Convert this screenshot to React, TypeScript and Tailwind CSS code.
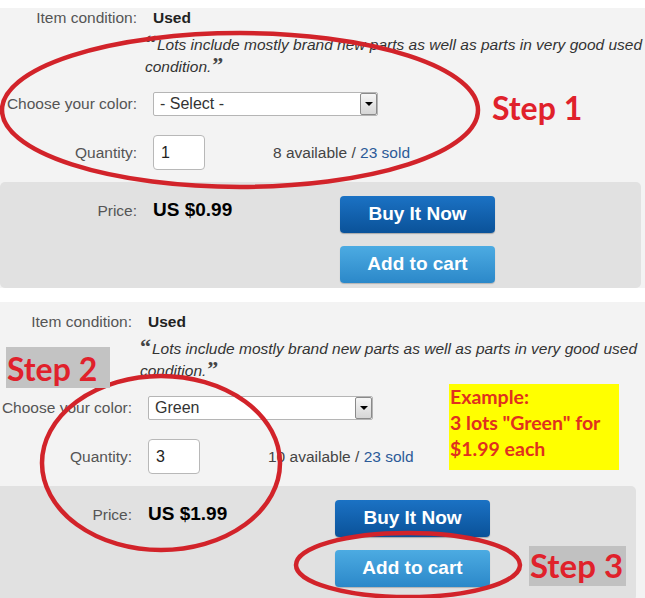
import React from "react";

interface PanelProps {
  color: string;
  qty: string;
  available: string;
  price: string;
  second?: boolean;
}

function ListingPanel({ color, qty, available, price, second }: PanelProps) {
  return (
    <div
      className={
        second
          ? "-ml-[5px] w-[650px] bg-[#f3f3f3] pt-[2px]"
          : "w-[650px] bg-[#f3f3f3]"
      }
    >
      {/* item condition */}
      <div className="mt-[8px] flex h-[20px] items-center text-[15.5px]">
        <span className="w-[137px] text-right text-[#555]">Item condition:</span>
        <span className="ml-[16px] font-bold text-[#222]">Used</span>
      </div>

      <p className="ml-[145px] mt-[6px] w-[500px] text-[15.5px] italic leading-[22px] text-[#333]">
        <span className="relative top-[0px] mr-[1px] font-['Liberation_Serif'] text-[22px] font-bold not-italic leading-[0] text-[#444]">
          “
        </span>
        Lots include mostly brand new parts as well as parts in very good used condition.
        <span className="relative top-[0px] ml-[1px] font-['Liberation_Serif'] text-[22px] font-bold not-italic leading-[0] text-[#444]">
          ”
        </span>
      </p>

      {/* color select */}
      <div className="mt-[14px] flex h-[24px] items-center text-[15.5px]">
        <span className="w-[137px] text-right text-[#555]">Choose your color:</span>
        <div className="ml-[16px] flex h-[24px] w-[225px] items-center justify-between rounded-[2px] border border-[#b5b5b5] bg-white pl-[6px]">
          <span className="text-[16px] text-[#333]">{color}</span>
          <div className="flex h-[22px] w-[17px] items-center justify-center rounded-[2px] border border-[#8a8a8a] bg-gradient-to-b from-[#f6f6f6] to-[#d6d6d6]">
            <div className="h-0 w-0 border-x-[4px] border-t-[4px] border-x-transparent border-t-black" />
          </div>
        </div>
      </div>

      {/* quantity */}
      <div className="mt-[19px] flex h-[35px] items-center text-[15.5px]">
        <span className="w-[137px] text-right text-[#555]">Quantity:</span>
        <div className="ml-[16px] flex h-[35px] w-[52px] items-center rounded-[4px] border border-[#b8b8b8] bg-white pl-[7px] text-[16px] text-[#222]">
          {qty}
        </div>
        <span className="ml-[68px] text-[#444]">
          {available} available / <span className="text-[#2b5a98]">23 sold</span>
        </span>
      </div>

      {/* price band */}
      <div
        className={
          second
            ? "mt-[12px] flex h-[115px] w-[641px] rounded-[5px] bg-[#e1e1e1]"
            : "mt-[12px] flex h-[106px] w-[641px] rounded-[5px] bg-[#e1e1e1]"
        }
      >
        <span className="mt-[17px] h-[20px] w-[137px] text-right text-[15.5px] text-[#555]">Price:</span>
        <span className="ml-[16px] mt-[16px] w-[187px] text-[19px] font-bold leading-[24px] text-black">
          US {price}
        </span>
        <div className="flex flex-col gap-[13px] pt-[14px]">
          <button className="h-[37px] w-[155px] rounded-[4px] bg-gradient-to-b from-[#1b72c4] to-[#0a5299] text-[19px] font-bold text-white shadow-[0_1px_1px_rgba(0,0,0,0.25)]">
            Buy It Now
          </button>
          <button className="h-[37px] w-[155px] rounded-[4px] bg-gradient-to-b from-[#4cabe2] to-[#2b88c9] text-[19px] font-bold text-white shadow-[0_1px_1px_rgba(0,0,0,0.2)]">
            Add to cart
          </button>
        </div>
      </div>
      {!second && <div className="h-[14px] bg-white" />}
    </div>
  );
}

export default function App() {
  return (
    <div className="relative h-[598px] w-[645px] overflow-hidden bg-white font-['Liberation_Sans',Arial,sans-serif]">
      <ListingPanel color="- Select -" qty="1" available="8" price="$0.99" />
      <ListingPanel color="Green" qty="3" available="10" price="$1.99" second />

      {/* hand-drawn annotations */}
      <svg className="pointer-events-none absolute left-0 top-0" width="645" height="598" viewBox="0 0 645 598">
        <g fill="none" stroke="#d2232a" strokeWidth="4.5">
          <ellipse cx="240" cy="110" rx="238" ry="77" />
          <ellipse cx="161" cy="463" rx="119" ry="87" />
          <ellipse cx="408" cy="565" rx="112" ry="32" />
        </g>
      </svg>

      <div className="absolute left-[492px] top-[92px] font-['Lato',sans-serif] text-[32px] font-bold leading-none text-[#e0212b]">
        Step 1
      </div>
      <div className="absolute left-[6px] top-[347px] h-[41px] w-[104px] bg-[#c3c3c3] pl-[1px] pt-[6px] font-['Lato',sans-serif] text-[32px] font-bold leading-none text-[#e0212b]">
        Step 2
      </div>
      <div className="absolute left-[529px] top-[546px] h-[40px] w-[97px] bg-[#c1c1c1] pl-[1px] pt-[3px] font-['Lato',sans-serif] text-[33px] font-bold leading-none text-[#e0212b]">
        Step 3
      </div>
      <div className="absolute left-[449px] top-[384px] h-[86px] w-[170px] bg-[#ffff00] px-[1px] font-['Lato',sans-serif] text-[19.5px] font-bold leading-[26px] text-[#e0301e]">
        Example:
        <br />
        3 lots "Green" for
        <br />
        $1.99 each
      </div>
    </div>
  );
}
